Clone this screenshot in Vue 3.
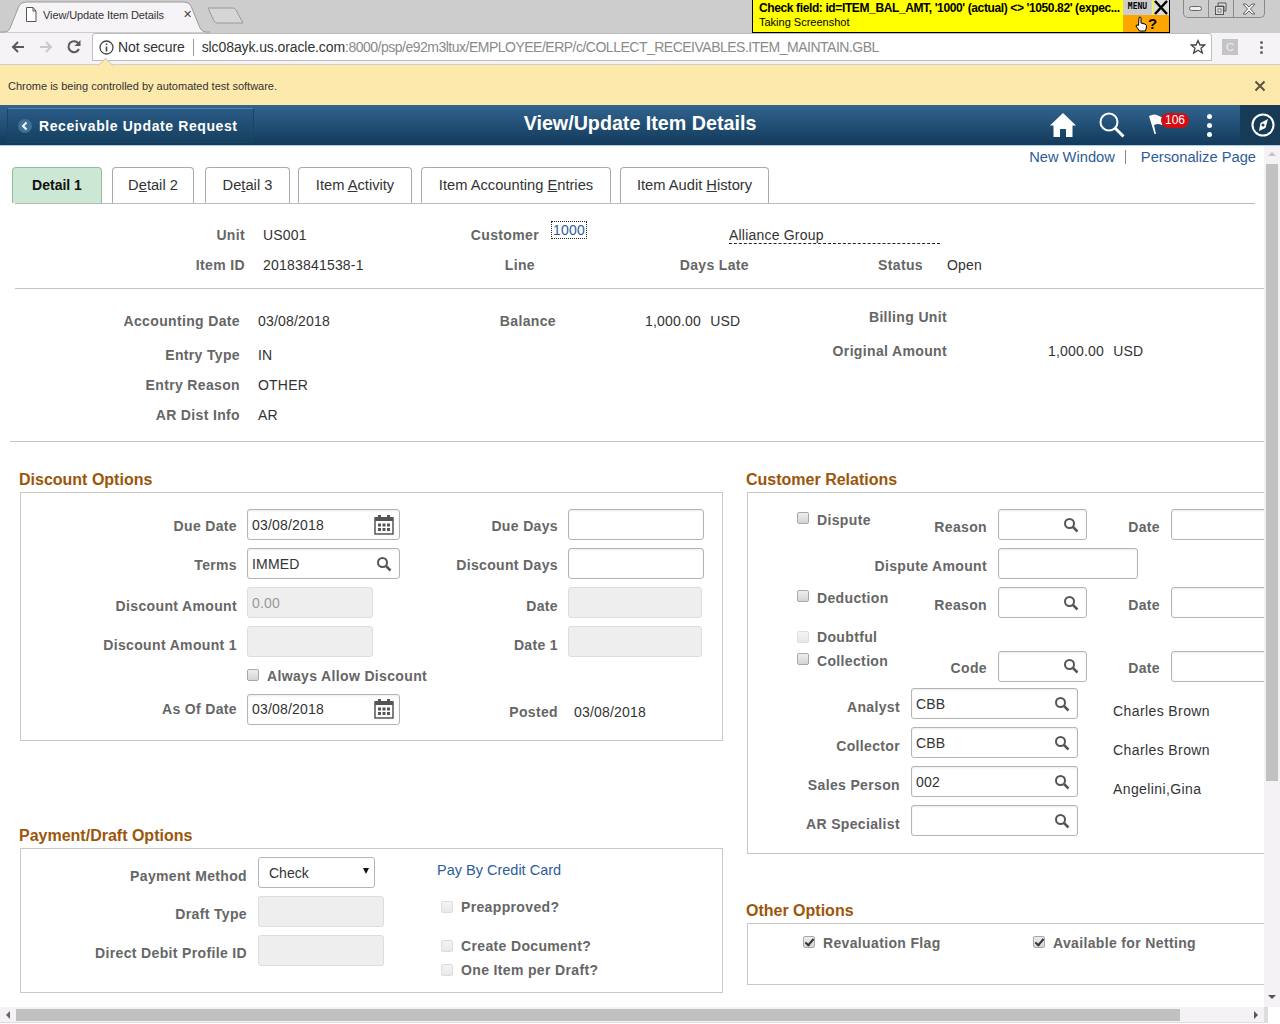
<template>
  <div class="shell">
    <div class="tabstrip">
      <div class="browser-tab">
        <svg class="tab-shape" width="210" height="33" viewBox="0 0 210 33">
          <path d="M0 32 L5 32 Q8 32 10 28 L19 6 Q21 2 26 2 L184 2 Q189 2 191 6 L200 28 Q202 32 206 32 L210 32" fill="#f6f4f6" stroke="#9a9a9a" />
        </svg>
        <svg class="page-icon" width="12" height="15" viewBox="0 0 12 15">
          <path d="M1.500 .5H8L11 4V14.500H1.500Z M8 .5V4H11" fill="#fff" stroke="#555" />
        </svg>
        <span class="tab-title">View/Update Item Details</span>
        <span class="tab-x">✕</span>
      </div>
      <svg class="new-tab" width="38" height="18" viewBox="0 0 38 18">
        <path d="M1 1H26Q28 1 29 3L36 16H10Q8 16 7 14Z" fill="#d6d6d6" stroke="#9a9a9a" />
      </svg>
      <div class="win-controls">
        <span class="win-btn">
          <svg width="14" height="6" viewBox="0 0 14 6"><rect x=".5" y=".5" width="12" height="4" rx="2" fill="#eee" stroke="#666" /></svg>
        </span>
        <span class="win-btn">
          <svg width="14" height="14" viewBox="0 0 14 14"><path d="M4 1H12V9H10V4H4Z" fill="#ddd" stroke="#555" /><rect x="1.500" y="4.500" width="8" height="8" fill="#ddd" stroke="#555" /><rect x="4" y="7" width="3" height="3" fill="#fff" stroke="#777" /></svg>
        </span>
        <span class="win-btn win-close">
          <svg width="16" height="12" viewBox="0 0 16 12"><path d="M2 1H5L8 4L11 1H14L9.500 6L14 11H11L8 8L5 11H2L6.500 6Z" fill="#eee" stroke="#666" /></svg>
        </span>
      </div>
    </div>

    <div class="toolbar">
      <svg class="nav-icon" width="16" height="16" viewBox="0 0 16 16"><path d="M14 8H3M8 3L3 8L8 13" fill="none" stroke="#5a5a5a" stroke-width="2" /></svg>
      <svg class="nav-icon forward" width="16" height="16" viewBox="0 0 16 16"><path d="M2 8H13M8 3L13 8L8 13" fill="none" stroke="#c9c9c9" stroke-width="2" /></svg>
      <svg class="nav-icon reload" width="16" height="16" viewBox="0 0 16 16"><path d="M13 10A5.500 5.500 0 1 1 12.500 4.500" fill="none" stroke="#5a5a5a" stroke-width="2" /><path d="M14.500 1V7H8.500Z" fill="#5a5a5a" /></svg>
      <div class="urlbox">
        <svg width="15" height="15" viewBox="0 0 15 15"><circle cx="7.500" cy="7.500" r="6.500" fill="none" stroke="#444" stroke-width="1.300" /><path d="M7.500 6.500V11.500M7.500 3.500V5" stroke="#444" stroke-width="1.600" /></svg>
        <span class="not-secure">Not secure</span>
        <span class="url-sep"></span>
        <span class="url-host">slc08ayk.us.oracle.com</span><span class="url-rest">:8000/psp/e92m3ltux/EMPLOYEE/ERP/c/COLLECT_RECEIVABLES.ITEM_MAINTAIN.GBL</span>
        <svg class="star" width="16" height="16" viewBox="0 0 16 16"><path d="M8 1.500L10 6H14.800L11 9.200L12.300 14L8 11.300L3.700 14L5 9.200L1.200 6H6Z" fill="none" stroke="#444" stroke-width="1.300" /></svg>
      </div>
      <span class="ext-badge">C</span>
      <span class="chrome-menu"><i></i><i></i><i></i></span>
    </div>

    <div class="infobar">
      <span class="info-notch"></span>
      <span>Chrome is being controlled by automated test software.</span>
      <svg width="12" height="12" viewBox="0 0 12 12"><path d="M1.500 1.500L10.500 10.500M10.500 1.500L1.500 10.500" stroke="#5a5346" stroke-width="2" /></svg>
    </div>

    <header class="banner">
      <button class="back-btn" type="button">
        <svg width="14" height="14" viewBox="0 0 14 14"><circle cx="7" cy="7" r="7" fill="#3f7197" /><path d="M8.500 3.500L5 7L8.500 10.500" fill="none" stroke="#fff" stroke-width="2" /></svg>
        Receivable Update Request
      </button>
      <h1 class="banner-title">View/Update Item Details</h1>
      <div class="banner-icons">
        <svg width="26" height="24" viewBox="0 0 26 24"><path d="M13 0L26 12.500H22.500V24H16V16H10V24H3.500V12.500H0Z" fill="#fff" /></svg>
        <svg width="26" height="26" viewBox="0 0 26 26"><circle cx="10" cy="10" r="8.500" fill="none" stroke="#fff" stroke-width="2" /><path d="M16 16L24.500 24.500" stroke="#fff" stroke-width="3" /></svg>
        <span class="flag-wrap">
          <svg width="24" height="24" viewBox="0 0 24 24"><path d="M1 3Q7 0 11 3T20 4L14 12Q10 10 6 12L8 21H6.500L1 3Z" fill="#fff" /></svg>
          <span class="flag-count">106</span>
        </span>
        <span class="kebab"><i></i><i></i><i></i></span>
      </div>
      <div class="compass-block">
        <svg width="24" height="24" viewBox="0 0 24 24"><circle cx="12" cy="12" r="10.500" fill="none" stroke="#fff" stroke-width="2" /><path d="M17 6L14.500 15L8 18L9.500 10Z" fill="#fff" /><circle cx="12" cy="12" r="1.500" fill="#1c4263" /></svg>
      </div>
    </header>

    <div class="overlay">
      <div class="overlay-text">
        <div class="overlay-check">Check field: id=ITEM_BAL_AMT, '1000' (actual) &lt;&gt; '1050.82' (expec...</div>
        <div class="overlay-status">Taking Screenshot</div>
      </div>
      <div class="overlay-side">
        <div class="overlay-top">
          <span class="overlay-menu">MENU</span>
          <svg width="16" height="15" viewBox="0 0 16 15"><rect width="16" height="15" fill="#ddd" /><path d="M2 1L14 14M14 1L2 14" stroke="#000" stroke-width="2.500" /></svg>
        </div>
        <div class="overlay-help">
          <svg width="13" height="16" viewBox="0 0 13 16"><path d="M4 1.500Q5.500 0 6 2V7L10 8Q12 9 11.500 11L10.500 15H4.500L1 10Q1 8 3.500 9.500Z" fill="#fff" stroke="#000" /></svg>
          <b>?</b>
        </div>
      </div>
    </div>

    <div class="viewport">
      <main class="content">
        <div class="toplinks">
          <a>New Window</a>
          <span class="link-sep"></span>
          <a>Personalize Page</a>
        </div>

        <nav class="tabs">
          <span class="tab active"><span>Detail 1</span></span>
          <span class="tab w-84"><span>D<u>e</u>tail 2</span></span>
          <span class="tab w-86"><span>De<u>t</u>ail 3</span></span>
          <span class="tab w-114"><span>Item <u>A</u>ctivity</span></span>
          <span class="tab w-190"><span>Item Accounting <u>E</u>ntries</span></span>
          <span class="tab w-149"><span>Item Audit <u>H</u>istory</span></span>
        </nav>

        <section class="summary">
          <div class="row">
            <label class="lbl w245">Unit</label>
            <span class="val ml18 w120">US001</span>
            <label class="lbl w156">Customer</label>
            <span class="val ml13 w177 cust-cell"><a class="cust-link">1000</a></span>
            <span class="val cust-name">Alliance Group</span>
          </div>
          <div class="row">
            <label class="lbl w245">Item ID</label>
            <span class="val ml18 w120">20183841538-1</span>
            <label class="lbl w152">Line</label>
            <label class="lbl w214">Days Late</label>
            <label class="lbl w174">Status</label>
            <span class="val ml24">Open</span>
          </div>
        </section>
        <hr class="rule rule-a" />

        <section class="details">
          <div class="col-a">
            <div class="row r36"><label class="lbl w240">Accounting Date</label><span class="val ml18">03/08/2018</span></div>
            <div class="row"><label class="lbl w240">Entry Type</label><span class="val ml18">IN</span></div>
            <div class="row"><label class="lbl w240">Entry Reason</label><span class="val ml18">OTHER</span></div>
            <div class="row"><label class="lbl w240">AR Dist Info</label><span class="val ml18">AR</span></div>
          </div>
          <div class="col-b">
            <div class="row r34">
              <label class="lbl w216">Balance</label>
              <span class="val amount ml89">1,000.00 <span>USD</span></span>
            </div>
          </div>
          <div class="col-c">
            <div class="row r34"><label class="lbl w207">Billing Unit</label></div>
            <div class="row r34">
              <label class="lbl w207">Original Amount</label>
              <span class="val amount ml101">1,000.00 <span>USD</span></span>
            </div>
          </div>
        </section>
        <hr class="rule rule-b" />

        <div class="columns">
          <div class="left-col">
            <h2 class="section-title">Discount Options</h2>
            <section class="box discount-grid">
              <label class="lbl nudge">Due Date</label>
              <div class="field w153">
                <input value="03/08/2018" />
                <svg class="cal" width="20" height="20" viewBox="0 0 20 20"><path d="M1 3H19V19H1Z" fill="#fff" stroke="#555" stroke-width="1.500" /><rect x="1" y="2" width="18" height="4" fill="#555" /><rect x="4" y="0" width="3" height="4" fill="#555" /><rect x="13" y="0" width="3" height="4" fill="#555" /><path d="M4 8.500h3v3H4zM8.500 8.500h3v3h-3zM13 8.500h3v3h-3zM4 13h3v3H4zM8.500 13h3v3h-3zM13 13h3v3h-3z" fill="#555" /></svg>
              </div>
              <label class="lbl nudge">Due Days</label>
              <input class="input w136" />

              <label class="lbl nudge">Terms</label>
              <div class="field w153">
                <input value="IMMED" />
                <svg class="mag" width="16" height="16" viewBox="0 0 16 16"><circle cx="6.500" cy="6.500" r="4.500" fill="none" stroke="#555" stroke-width="2" /><path d="M10 10L14.500 14.500" stroke="#555" stroke-width="2.500" /></svg>
              </div>
              <label class="lbl nudge">Discount Days</label>
              <input class="input w136" />

              <label class="lbl nudge-more">Discount Amount</label>
              <input class="input w126" value="0.00" disabled />
              <label class="lbl nudge-more">Date</label>
              <input class="input w134" disabled />

              <label class="lbl nudge-more">Discount Amount 1</label>
              <input class="input w126" disabled />
              <label class="lbl nudge-more">Date 1</label>
              <input class="input w134" disabled />

              <span></span>
              <div class="check-line always"><input class="chk" type="checkbox" /><label>Always Allow Discount</label></div>
              <span></span>

              <label class="lbl">As Of Date</label>
              <div class="field w153">
                <input value="03/08/2018" />
                <svg class="cal" width="20" height="20" viewBox="0 0 20 20"><path d="M1 3H19V19H1Z" fill="#fff" stroke="#555" stroke-width="1.500" /><rect x="1" y="2" width="18" height="4" fill="#555" /><rect x="4" y="0" width="3" height="4" fill="#555" /><rect x="13" y="0" width="3" height="4" fill="#555" /><path d="M4 8.500h3v3H4zM8.500 8.500h3v3h-3zM13 8.500h3v3h-3zM4 13h3v3H4zM8.500 13h3v3h-3zM13 13h3v3h-3z" fill="#555" /></svg>
              </div>
              <label class="lbl nudge-more">Posted</label>
              <span class="val posted">03/08/2018</span>
            </section>

            <h2 class="section-title payment-title">Payment/Draft Options</h2>
            <section class="box payment-grid">
              <label class="lbl nudge-more">Payment Method</label>
              <div class="select-wrap">
                <select><option>Check</option></select>
              </div>
              <div class="pay-side">
                <a class="pay-link">Pay By Credit Card</a>
                <div class="check-line preapproved"><input class="chk" type="checkbox" disabled /><label>Preapproved?</label></div>
                <div class="check-line create-doc"><input class="chk" type="checkbox" disabled /><label>Create Document?</label></div>
                <div class="check-line one-item"><input class="chk" type="checkbox" disabled /><label>One Item per Draft?</label></div>
              </div>

              <label class="lbl nudge-some">Draft Type</label>
              <input class="input w126" disabled />
              <label class="lbl nudge-some">Direct Debit Profile ID</label>
              <input class="input w126" disabled />
            </section>
          </div>

          <div class="right-col">
            <h2 class="section-title">Customer Relations</h2>
            <section class="box relations">
              <div class="rel-grid">
                <div class="rel-first">
                  <div class="check-line rel-check"><input class="chk" type="checkbox" /><label>Dispute</label></div>
                  <label class="lbl nudge-some">Reason</label>
                </div>
                <div class="field w89"><input /><svg class="mag" width="16" height="16" viewBox="0 0 16 16"><circle cx="6.500" cy="6.500" r="4.500" fill="none" stroke="#555" stroke-width="2" /><path d="M10 10L14.500 14.500" stroke="#555" stroke-width="2.500" /></svg></div>
                <label class="lbl nudge-some">Date</label>
                <input class="input w120" />

                <label class="lbl nudge-some">Dispute Amount</label>
                <input class="input w140 span-3" />

                <div class="rel-first">
                  <div class="check-line rel-check"><input class="chk" type="checkbox" /><label>Deduction</label></div>
                  <label class="lbl nudge-some">Reason</label>
                </div>
                <div class="field w89"><input /><svg class="mag" width="16" height="16" viewBox="0 0 16 16"><circle cx="6.500" cy="6.500" r="4.500" fill="none" stroke="#555" stroke-width="2" /><path d="M10 10L14.500 14.500" stroke="#555" stroke-width="2.500" /></svg></div>
                <label class="lbl nudge-some">Date</label>
                <input class="input w120" />

                <div class="check-line doubtful"><input class="chk" type="checkbox" disabled /><label>Doubtful</label></div>
                <span class="span-3"></span>

                <div class="rel-first">
                  <div class="check-line rel-check"><input class="chk" type="checkbox" /><label>Collection</label></div>
                  <label class="lbl nudge">Code</label>
                </div>
                <div class="field w89"><input /><svg class="mag" width="16" height="16" viewBox="0 0 16 16"><circle cx="6.500" cy="6.500" r="4.500" fill="none" stroke="#555" stroke-width="2" /><path d="M10 10L14.500 14.500" stroke="#555" stroke-width="2.500" /></svg></div>
                <label class="lbl nudge">Date</label>
                <input class="input w120" />
              </div>

              <div class="people-grid">
                <template v-for="p in people" :key="p.label">
                  <label class="lbl nudge-more">{{ p.label }}</label>
                  <div class="field w167">
                    <input :value="p.code" />
                    <svg class="mag" width="16" height="16" viewBox="0 0 16 16"><circle cx="6.500" cy="6.500" r="4.500" fill="none" stroke="#555" stroke-width="2" /><path d="M10 10L14.500 14.500" stroke="#555" stroke-width="2.500" /></svg>
                  </div>
                  <span class="val person">{{ p.name }}</span>
                </template>
              </div>
            </section>

            <h2 class="section-title other-title">Other Options</h2>
            <section class="box other">
              <div class="check-line reval"><input class="chk" type="checkbox" checked disabled /><label>Revaluation Flag</label></div>
              <div class="check-line"><input class="chk" type="checkbox" checked disabled /><label>Available for Netting</label></div>
            </section>
          </div>
        </div>
      </main>

      <div class="vscroll">
        <span class="arrow-up"></span>
        <div class="vthumb"></div>
        <span class="arrow-down"></span>
      </div>
    </div>

    <div class="hscroll">
      <span class="arrow-left"></span>
      <div class="hthumb"></div>
      <span class="arrow-right"></span>
      <span class="corner"></span>
    </div>
  </div>
</template>

<script setup>
const people = [
  { label: 'Analyst', code: 'CBB', name: 'Charles Brown' },
  { label: 'Collector', code: 'CBB', name: 'Charles Brown' },
  { label: 'Sales Person', code: '002', name: 'Angelini,Gina' },
  { label: 'AR Specialist', code: '', name: '' }
]
</script>

<style>
html, body {
  margin: 0;
  background: #fff;
  overflow: hidden;
}
</style>

<style scoped>
.shell {
  position: relative;
  width: 1280px;
  height: 1024px;
  overflow: hidden;
  font-family: "Liberation Sans", Arial, sans-serif;
  font-size: 14px;
  color: #333;
  background: #fff;
}

/* browser chrome */
.tabstrip {
  display: flex;
  align-items: flex-start;
  height: 33px;
  background: #cdcdcd;
  box-sizing: border-box;
}
.browser-tab {
  position: relative;
  display: flex;
  align-items: center;
  width: 210px;
  height: 33px;
  padding: 0 0 4px 25px;
  box-sizing: border-box;
}
.tab-shape {
  position: absolute;
  left: 0;
  top: 0;
}
.page-icon,
.tab-title,
.tab-x {
  position: relative;
}
.tab-title {
  margin-left: 6px;
  font-size: 11px;
  letter-spacing: -.1px;
  color: #333;
  width: 128px;
  white-space: nowrap;
}
.tab-x {
  margin-left: 12px;
  font-size: 11px;
  color: #444;
}
.new-tab {
  margin: 7px 0 0 -3px;
}
.win-controls {
  display: flex;
  height: 17px;
  margin-left: auto;
  margin-right: 15px;
  border: 1px solid #8a8a8a;
  border-top: none;
  border-radius: 0 0 5px 5px;
}
.win-btn {
  display: flex;
  align-items: center;
  justify-content: center;
  box-sizing: border-box;
  width: 25px;
  height: 17px;
  border-right: 1px solid #8a8a8a;
}
.win-close {
  width: 30px;
  border-right: none;
}
.toolbar {
  display: flex;
  align-items: center;
  height: 32px;
  padding: 0 0 3px 10px;
  box-sizing: border-box;
  background: #f5f3f5;
  border-bottom: 1px solid #cfcfcf;
}
.nav-icon.forward {
  margin-left: 12px;
}
.nav-icon.reload {
  margin-left: 12px;
}
.urlbox {
  display: flex;
  align-items: center;
  width: 1120px;
  height: 28px;
  margin-left: 10px;
  padding-left: 6px;
  box-sizing: border-box;
  background: #fff;
  border: 1px solid #bdbdbd;
  border-radius: 3px 3px 0 0;
  white-space: nowrap;
}
.not-secure {
  margin-left: 4px;
  letter-spacing: -.1px;
  color: #333;
}
.url-sep {
  width: 1px;
  height: 17px;
  margin: 0 8px 0 8px;
  background: #999;
}
.url-host {
  color: #333;
  letter-spacing: -.1px;
}
.url-rest {
  color: #8a8a8a;
  letter-spacing: -.5px;
}
.star {
  margin-left: auto;
  margin-right: 5px;
}
.ext-badge {
  display: flex;
  align-items: center;
  justify-content: center;
  width: 16px;
  height: 16px;
  margin-left: 10px;
  background: #c4c4c4;
  color: #eee;
  font-size: 11px;
}
.chrome-menu {
  display: flex;
  flex-direction: column;
  gap: 2px;
  margin-left: 22px;
}
.chrome-menu i {
  width: 3px;
  height: 3px;
  border-radius: 50%;
  background: #666;
}
.infobar {
  position: relative;
  display: flex;
  align-items: center;
  justify-content: space-between;
  height: 40px;
  padding: 1px 14px 0 8px;
  box-sizing: border-box;
  background: #fde9ab;
  font-size: 11px;
  color: #333;
}
.info-notch {
  position: absolute;
  left: 100px;
  top: -5px;
  width: 10px;
  height: 10px;
  background: #fde9ab;
  transform: rotate(45deg);
  border-left: 1px solid #cfcfcf;
  border-top: 1px solid #cfcfcf;
}

/* banner */
.banner {
  position: relative;
  display: flex;
  align-items: center;
  height: 41px;
  box-sizing: border-box;
  background: linear-gradient(#32648f, #123a5b);
  border-bottom: 1px solid #a6cfe6;
  color: #fff;
}
.back-btn {
  display: flex;
  align-items: center;
  gap: 7px;
  width: 247px;
  height: 35px;
  margin-left: 7px;
  padding: 1px 0 0 10px;
  box-sizing: border-box;
  background: linear-gradient(#2a5a86, #15405f);
  border: 1px solid #1a4465;
  border-top-color: #4f83ad;
  border-radius: 2px;
  color: #fff;
  font: bold 14px "Liberation Sans", Arial, sans-serif;
  letter-spacing: .6px;
}
.banner-title {
  position: absolute;
  left: 0;
  right: 0;
  top: 5px;
  margin: 0;
  text-align: center;
  font-size: 19.700px;
  line-height: 26px;
  font-weight: bold;
  pointer-events: none;
}
.banner-icons {
  display: flex;
  align-items: center;
  margin-left: auto;
}
.banner-icons > svg:first-child {
  margin-right: 23px;
}
.flag-wrap {
  position: relative;
  display: flex;
  margin-left: 23px;
  margin-right: 35px;
}
.flag-count {
  position: absolute;
  left: 13px;
  top: 0;
  width: 28px;
  height: 15px;
  border-radius: 8px;
  background: #d40d12;
  color: #fff;
  font-size: 12px;
  line-height: 15px;
  text-align: center;
}
.kebab {
  display: flex;
  flex-direction: column;
  gap: 4px;
  margin-right: 28px;
}
.kebab i {
  width: 5px;
  height: 5px;
  border-radius: 50%;
  background: #fff;
}
.compass-block {
  display: flex;
  align-items: center;
  justify-content: center;
  width: 40px;
  height: 40px;
  padding-left: 6px;
  box-sizing: border-box;
  background: #173a57;
}

/* selenium ide style overlay */
.overlay {
  position: absolute;
  left: 752px;
  top: 0;
  display: flex;
  justify-content: space-between;
  width: 418px;
  height: 33px;
  box-sizing: border-box;
  background: #ff0;
  border: 1px solid #000;
  border-top: none;
  color: #000;
}
.overlay-text {
  flex: 1;
  min-width: 0;
  padding: 1px 0 0 6px;
  white-space: nowrap;
}
.overlay-check {
  font-size: 12px;
  font-weight: bold;
  letter-spacing: -.38px;
  line-height: 15px;
}
.overlay-status {
  margin-top: -1px;
  font-size: 11px;
  line-height: 14px;
}
.overlay-side {
  display: flex;
  flex: none;
  flex-direction: column;
  width: 46px;
}
.overlay-top {
  display: flex;
  justify-content: space-between;
  height: 15px;
}
.overlay-menu {
  width: 29px;
  background: #ccc;
  font: bold 8px "DejaVu Sans Mono", monospace;
  line-height: 14px;
  text-align: center;
}
.overlay-help {
  display: flex;
  align-items: center;
  justify-content: center;
  flex: 1;
  background: #ffa500;
}
.overlay-help b {
  font-size: 15px;
  line-height: 15px;
}

/* page */
.viewport {
  display: flex;
  height: 861px;
}
.content {
  width: 1264px;
  overflow: hidden;
  flex: none;
}
a {
  color: #2e5c9a;
  cursor: pointer;
}
.toplinks {
  display: flex;
  justify-content: flex-end;
  align-items: center;
  height: 21px;
  padding-right: 8px;
  font-size: 14.700px;
}
.link-sep {
  width: 1px;
  height: 14px;
  margin: 0 15px 0 10px;
  background: #888;
}
.tabs {
  display: flex;
  height: 37px;
  margin-left: 15px;
  margin-right: 9px;
  border-bottom: 1px solid #bbb;
  box-sizing: border-box;
}
.tab {
  display: flex;
  align-items: center;
  justify-content: center;
  height: 36px;
  padding-bottom: 2px;
  box-sizing: border-box;
  border: 1px solid #aaa;
  border-bottom: none;
  border-radius: 4px 4px 0 0;
  background: #fff;
  color: #333;
  font-size: 14.700px;
  white-space: nowrap;
}
.tab.active {
  width: 90px;
  margin-left: -3px;
  background: #cce8d4;
  border-color: #93bfa1;
  color: #111;
  font-size: 14px;
  font-weight: bold;
}
.w-84 { width: 82px; margin-left: 10px; }
.w-86 { width: 85px; margin-left: 11px; }
.w-114 { width: 114px; margin-left: 8px; }
.w-190 { width: 190px; margin-left: 9px; }
.w-149 { width: 149px; margin-left: 9px; }

.summary {
  padding-top: 16px;
}
.row {
  display: flex;
  align-items: center;
  height: 30px;
}
.r34 {
  height: 34px;
}
.r36 {
  height: 34px;
  margin-bottom: 2px;
}
.lbl {
  display: block;
  box-sizing: border-box;
  flex: none;
  text-align: right;
  font-weight: bold;
  color: #666;
  font-size: 14px;
  letter-spacing: .35px;
  white-space: nowrap;
}
.val {
  flex: none;
  color: #333;
  font-size: 14px;
  letter-spacing: .2px;
  white-space: nowrap;
}
.w245 { width: 245px; }
.w240 { width: 240px; }
.w216 { width: 216px; }
.w207 { width: 207px; }
.w156 { width: 156px; }
.w152 { width: 152px; }
.w214 { width: 214px; }
.w174 { width: 174px; }
.w120 { width: 120px; }
.w177 { width: 177px; }
.ml18 { margin-left: 18px; }
.ml13 { margin-left: 13px; }
.ml24 { margin-left: 24px; }
.ml89 { margin-left: 89px; }
.ml101 { margin-left: 101px; }
.cust-cell {
  margin-top: -10px;
}
.cust-link {
  display: inline-block;
  outline: 1px dotted #222;
  outline-offset: 0;
  padding: 0 1px;
  line-height: 16px;
}
.cust-name {
  width: 211px;
  padding-top: 1px;
  box-sizing: border-box;
  border-bottom: 1px dashed #222;
  line-height: 16px;
}
.rule {
  height: 1px;
  margin: 0;
  border: none;
  background: #c4c4c4;
}
.rule-a {
  margin: 8px 0 0 15px;
}
.rule-b {
  margin-left: 10px;
}
.details {
  display: flex;
  align-items: flex-start;
  height: 152px;
}
.col-a {
  width: 340px;
  padding-top: 15px;
}
.col-b {
  width: 400px;
  padding-top: 15px;
}
.col-c {
  padding-top: 11px;
}
.amount span {
  margin-left: 5px;
}

.columns {
  display: flex;
  align-items: flex-start;
  padding-left: 20px;
}
.left-col {
  flex: none;
  width: 703px;
}
.right-col {
  flex: none;
  width: 600px;
  margin-left: 24px;
}
.section-title {
  height: 20px;
  margin: 28px 0 2px -1px;
  font-size: 16px;
  line-height: 20px;
  font-weight: bold;
  color: #9c5609;
  white-space: nowrap;
}
.payment-title {
  margin-top: 85px;
}
.other-title {
  margin-top: 47px;
}
.box {
  box-sizing: border-box;
  border: 1px solid #c8c8c8;
}

.input {
  box-sizing: border-box;
  height: 31px;
  padding: 0 4px;
  border: 1px solid #b4b4b4;
  border-radius: 3px;
  background: #fff;
  box-shadow: inset 0 1px 2px rgba(0, 0, 0, .08);
  color: #333;
  font: 14px "Liberation Sans", Arial, sans-serif;
  letter-spacing: .2px;
  outline: none;
}
.input:disabled {
  background: #eee;
  border-color: #ddd;
  box-shadow: none;
  color: #999;
}
.field {
  display: flex;
  align-items: center;
  box-sizing: border-box;
  height: 31px;
  padding-right: 7px;
  border: 1px solid #b4b4b4;
  border-radius: 3px;
  background: #fff;
  box-shadow: inset 0 1px 2px rgba(0, 0, 0, .08);
}
.field input {
  flex: 1;
  min-width: 0;
  padding: 0 0 0 4px;
  border: none;
  background: transparent;
  color: #333;
  font: 14px "Liberation Sans", Arial, sans-serif;
  letter-spacing: .2px;
  outline: none;
}
.field svg {
  flex: none;
}
.field .cal {
  margin-right: -2px;
}
.w153 { width: 153px; }
.w167 { width: 167px; }
.w89 { width: 89px; }
.w136 { width: 136px; }
.w134 { width: 134px; }
.w126 { width: 126px; }
.w140 { width: 140px; }
.nudge { padding-top: 3px; }
.nudge-some { padding-top: 5px; }
.nudge-more { padding-top: 6px; }
.payment-grid .nudge-some { padding-top: 4px; }

.chk {
  appearance: none;
  position: relative;
  flex: none;
  box-sizing: border-box;
  width: 12px;
  height: 12px;
  margin: 0;
  border: 1px solid #a8a8a8;
  border-radius: 2px;
  background: linear-gradient(#eee, #d4d4d4);
}
.chk:disabled {
  border-color: #ddd;
  background: linear-gradient(#f4f4f4, #e8e8e8);
}
.chk:checked {
  border-color: #a8a8a8;
  background: linear-gradient(#eee, #d4d4d4);
}
.chk:checked::after {
  content: "";
  position: absolute;
  left: 3px;
  top: 0;
  width: 3px;
  height: 7px;
  border: solid #333;
  border-width: 0 2px 2px 0;
  transform: rotate(40deg);
}
.check-line {
  display: flex;
  align-items: center;
  gap: 8px;
}
.check-line label {
  font-weight: bold;
  color: #666;
  letter-spacing: .35px;
  white-space: nowrap;
}

.discount-grid {
  display: grid;
  grid-template-columns: 216px 153px 148px 1fr;
  grid-template-rows: 39px 39px 39px 39px 30px 36px;
  column-gap: 10px;
  align-items: center;
  height: 249px;
  padding-top: 12px;
}
.always {
  grid-column: 2 / 4;
}
.always .chk {
  margin-top: -3px;
}
.posted {
  padding: 6px 0 0 6px;
}
.payment-grid {
  display: grid;
  grid-template-columns: 226px 126px 1fr;
  grid-template-rows: 39px 39px 39px;
  column-gap: 11px;
  align-items: center;
  height: 145px;
  padding-top: 4px;
}
.select-wrap {
  position: relative;
  width: 117px;
}
.select-wrap select {
  appearance: none;
  display: block;
  box-sizing: border-box;
  width: 100%;
  height: 31px;
  padding: 0 0 0 10px;
  border: 1px solid #b4b4b4;
  border-radius: 3px;
  background: #fff;
  color: #333;
  font: 14px "Liberation Sans", Arial, sans-serif;
}
.select-wrap::after {
  content: "";
  position: absolute;
  right: 6px;
  top: 11px;
  border: 3px solid transparent;
  border-top: 6px solid #111;
  border-bottom: none;
}
.pay-side {
  grid-column: 3;
  grid-row: 1 / 4;
  align-self: start;
  display: flex;
  flex-direction: column;
  padding-left: 42px;
}
.pay-link {
  display: block;
  height: 34px;
  line-height: 34px;
  font-size: 14.500px;
}
.preapproved {
  height: 40px;
  padding-left: 4px;
}
.create-doc {
  height: 24px;
  margin-top: 7px;
  padding-left: 4px;
}
.one-item {
  height: 24px;
  padding-left: 4px;
}

.relations {
  padding: 12px 0 13px;
  height: 362px;
}
.rel-grid {
  display: grid;
  grid-template-columns: 239px 89px 62px 120px;
  grid-template-rows: 39px 39px 39px 25px 38px;
  column-gap: 11px;
  align-items: center;
}
.rel-first {
  display: flex;
  align-items: center;
  justify-content: space-between;
  padding-left: 49px;
}
.rel-check {
  margin-bottom: 10px;
}
.rel-check .chk {
  margin-top: -4px;
}
.span-3 {
  grid-column: 2 / 5;
  justify-self: start;
}
.doubtful {
  padding: 5px 0 0 49px;
}
.people-grid {
  display: grid;
  grid-template-columns: 152px 167px 1fr;
  grid-auto-rows: 39px;
  column-gap: 11px;
  align-items: center;
  margin-top: -1px;
}
.person {
  padding: 14px 0 0 24px;
  letter-spacing: .4px;
}
.other {
  display: flex;
  align-items: center;
  height: 62px;
  padding: 0 0 22px 55px;
}
.other .chk {
  margin-top: -2px;
}
.reval {
  width: 230px;
}

/* scrollbars */
.vscroll {
  position: relative;
  flex: none;
  width: 16px;
  background: #f5f2f5;
}
.vthumb {
  position: absolute;
  left: 2px;
  top: 18px;
  width: 12px;
  height: 617px;
  background: #c1c1c1;
}
.arrow-up,
.arrow-down,
.arrow-left,
.arrow-right {
  position: absolute;
  width: 0;
  height: 0;
  border: 4px solid transparent;
}
.arrow-up {
  left: 4px;
  top: 6px;
  border-top: none;
  border-bottom-color: #c4c4c4;
}
.arrow-down {
  left: 4px;
  bottom: 8px;
  border-bottom: none;
  border-top-color: #555;
}
.hscroll {
  position: relative;
  height: 16px;
  background: #f5f2f5;
  border-bottom: 1px solid #ddd;
  box-sizing: border-box;
}
.hthumb {
  position: absolute;
  left: 16px;
  top: 2px;
  width: 1164px;
  height: 12px;
  background: #c1c1c1;
}
.arrow-left {
  left: 6px;
  top: 4px;
  border-left: none;
  border-right-color: #666;
}
.arrow-right {
  left: 1254px;
  top: 4px;
  border-right: none;
  border-left-color: #555;
}
.corner {
  position: absolute;
  right: 0;
  top: 0;
  width: 16px;
  height: 16px;
  background: #fff;
  border-left: 4px solid #ddd;
  box-sizing: border-box;
}
</style>
